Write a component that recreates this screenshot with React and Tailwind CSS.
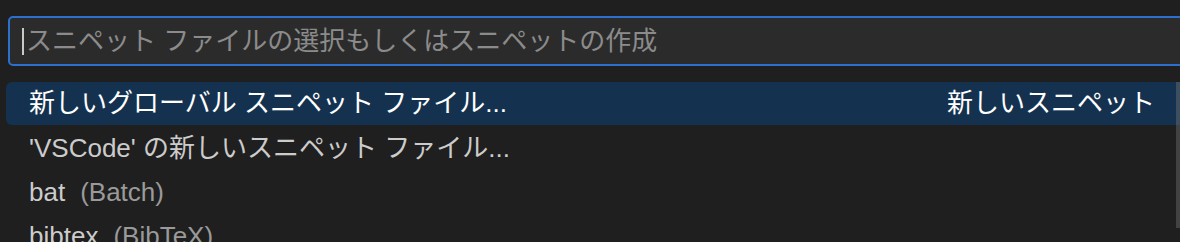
import React from "react";

const rows = [
  { label: "'VSCode' の新しいスニペット ファイル...", desc: "" },
  { label: "bat", desc: "(Batch)" },
  { label: "bibtex", desc: "(BibTeX)" },
];

const App = () => {
  return (
    <div className="relative h-[242px] w-full overflow-hidden bg-[#1f1f1f] pt-[16px] font-['Liberation_Sans','Noto_Sans_CJK_JP',sans-serif] text-[26px]">
      <div className="ml-[8px] -mr-[10px] flex h-[50px] items-center rounded-[5px] border-2 border-[#2c6fcd] bg-[#2b2b2b] pl-[12px]">
        <span className="inline-block h-[27px] w-[2px] bg-[#c8c8c8]"></span>
        <span className="ml-[2px] text-[#8b8b8b] leading-none">
          スニペット ファイルの選択もしくはスニペットの作成
        </span>
      </div>

      <div className="mt-[16px] flex flex-col pl-[6px]">
        <div className="flex h-[43px] items-center justify-between rounded-l-[6px] bg-[#14324f] pl-[23px] pr-[25px] text-white">
          <span>新しいグローバル スニペット ファイル...</span>
          <span>新しいスニペット</span>
        </div>
        {rows.map((row, index) => (
          <div
            key={index}
            className="flex h-[44px] items-center pl-[23px] pt-[2px] text-[#cccccc]"
          >
            <span>{row.label}</span>
            {row.desc && (
              <span className="ml-[15px] text-[#9a9a9a]">{row.desc}</span>
            )}
          </div>
        ))}
      </div>

      <div className="absolute right-0 top-[82px] h-[146px] w-[4px] bg-[#79797966]"></div>
    </div>
  );
};

export default App;
